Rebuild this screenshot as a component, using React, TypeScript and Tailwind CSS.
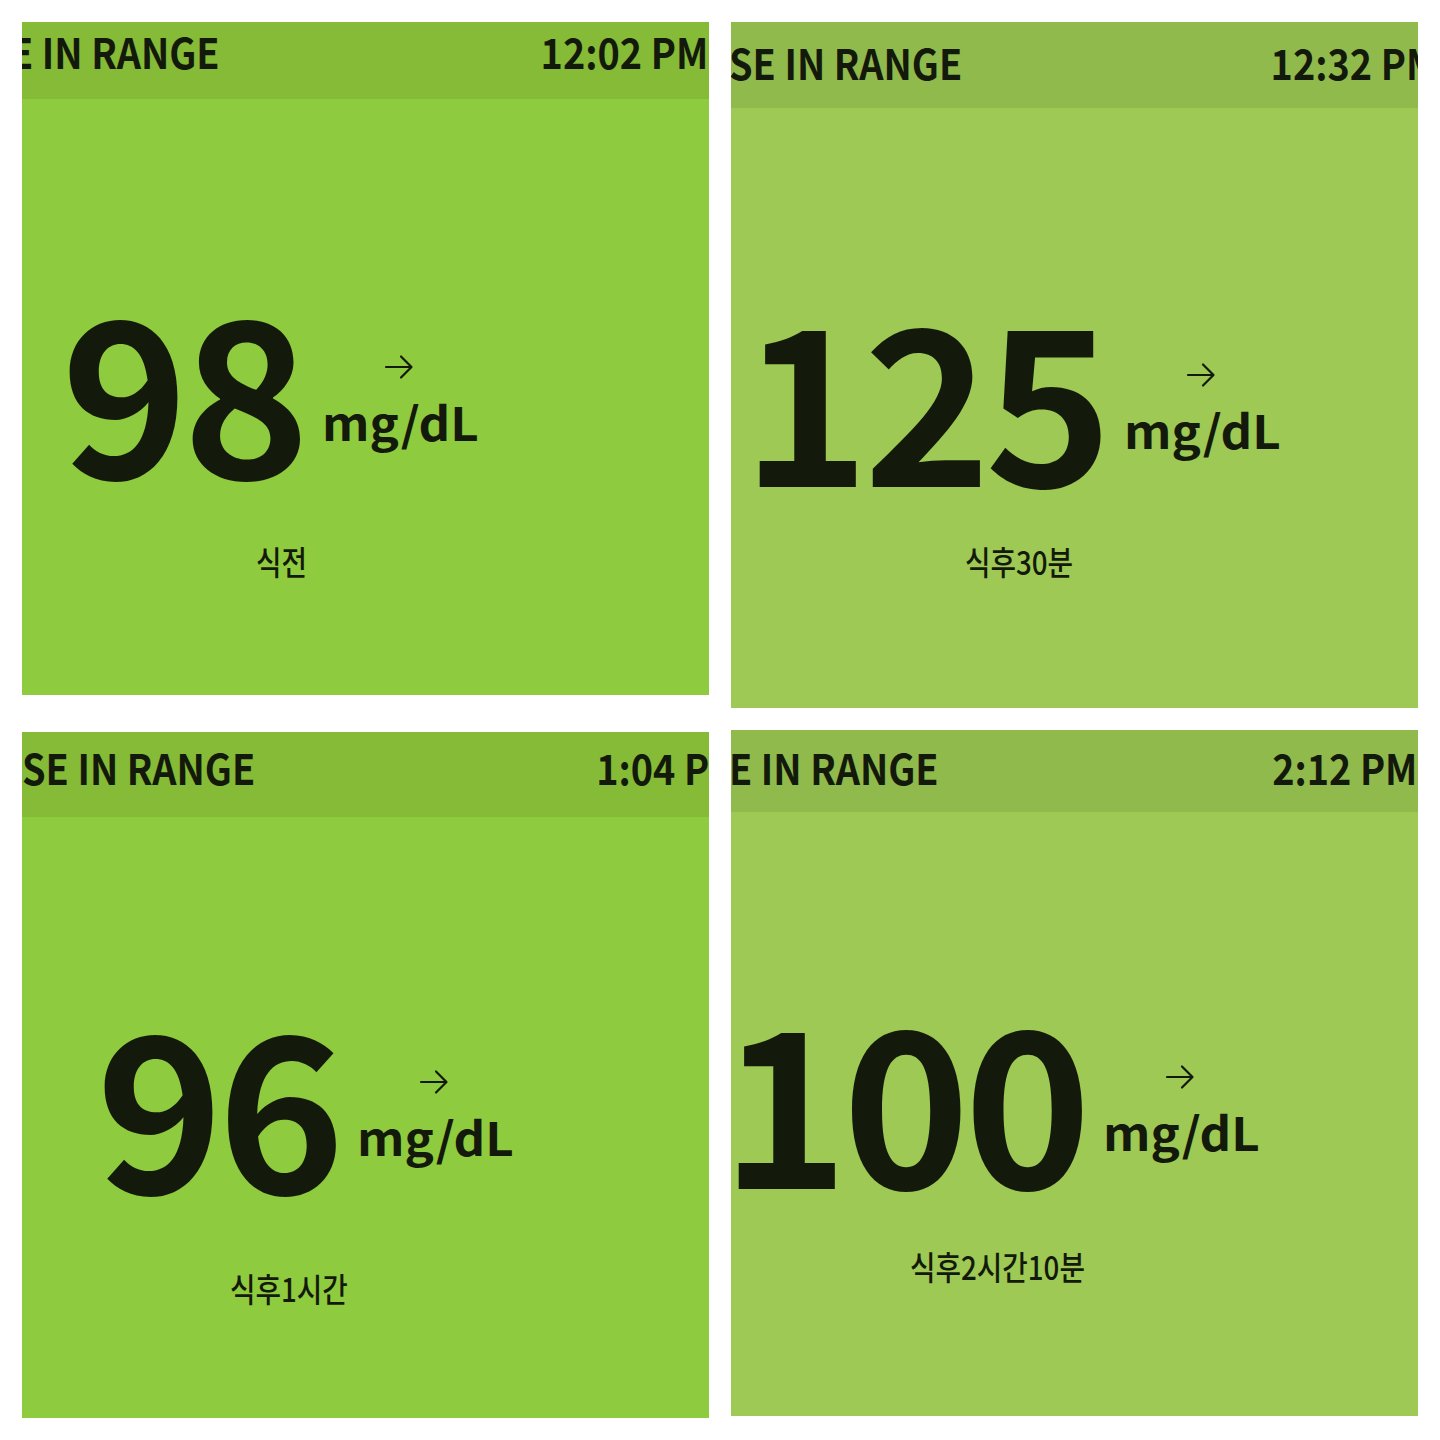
const font = {
  fontFamily: '"Noto Sans CJK KR", "Noto Sans", sans-serif',
};

type Reading = {
  value: string;
  time: string;
  status: string;
  label: string;
  panel: string;
  bar: string;
  title: string;
  clock: string;
  body: string;
  note: string;
};

const readings: Reading[] = [
  {
    value: "98",
    time: "12:02 PM",
    status: "E IN RANGE",
    label: "식전",
    panel: "h-[673px] bg-[#8fcb3e]",
    bar: "h-[77px] pt-[8px] bg-[#85bb37]",
    title: "ml-[-12px]",
    clock: "mr-[1px]",
    body: "ml-[39px] pt-[178px]",
    note: "mt-[52px] ml-[195px]",
  },
  {
    value: "125",
    time: "12:32 PM",
    status: "SE IN RANGE",
    label: "식후30분",
    panel: "h-[686px] bg-[#9dc954]",
    bar: "h-[86px] pt-[19px] bg-[#91ba4d]",
    title: "ml-[-2px]",
    clock: "mr-[-20px]",
    body: "ml-[11px] pt-[177px]",
    note: "mt-[44px] ml-[223px]",
  },
  {
    value: "96",
    time: "1:04 PM",
    status: "SE IN RANGE",
    label: "식후1시간",
    panel: "mt-[2px] h-[686px] bg-[#8fcb3e]",
    bar: "h-[85px] pt-[14px] bg-[#85bb37]",
    title: "ml-0",
    clock: "mr-[-32px]",
    body: "ml-[74px] pt-[175px]",
    note: "mt-[64px] ml-[134px]",
  },
  {
    value: "100",
    time: "2:12 PM",
    status: "E IN RANGE",
    label: "식후2시간10분",
    panel: "h-[686px] bg-[#9dc954]",
    bar: "h-[82px] pt-[16px] bg-[#91ba4d]",
    title: "ml-[-2px]",
    clock: "mr-[1px]",
    body: "ml-[-10px] pt-[175px]",
    note: "mt-[47px] ml-[189px]",
  },
];

function Arrow() {
  return (
    <svg
      width="30"
      height="30"
      viewBox="0 0 30 30"
      fill="none"
      stroke="#141a0b"
      strokeWidth="2.2"
      strokeLinecap="round"
      strokeLinejoin="round"
    >
      <path d="M2 15h25" />
      <path d="M17 4.5 27.5 15 17 25.5" />
    </svg>
  );
}

function Panel({ r }: { r: Reading }) {
  return (
    <div
      className={`flex w-[687px] flex-col overflow-hidden text-[#141a0b] ${r.panel}`}
      style={font}
    >
      <div
        className={`flex shrink-0 items-start justify-between whitespace-nowrap text-[42px] font-bold leading-none ${r.bar}`}
      >
        <span className={`inline-block origin-left scale-x-[0.9] ${r.title}`}>
          {r.status}
        </span>
        <span className={`inline-block origin-right scale-x-[0.9] ${r.clock}`}>
          {r.time}
        </span>
      </div>

      <div className={`flex flex-col items-start ${r.body}`}>
        <div className="flex items-start">
          <span className="text-[216px] font-bold leading-none tracking-[-6px]">
            {r.value}
          </span>
          <div className="ml-[18px] mt-[75px] flex flex-col items-start">
            <div className="ml-[62px]">
              <Arrow />
            </div>
            <span className="mt-[16px] inline-block origin-left scale-x-[1.07] whitespace-nowrap text-[46px] font-bold leading-none">
              mg/dL
            </span>
          </div>
        </div>
        <p
          className={`inline-block origin-left scale-x-[0.84] whitespace-nowrap text-[33px] font-medium leading-none ${r.note}`}
        >
          {r.label}
        </p>
      </div>
    </div>
  );
}

export default function App() {
  return (
    <main className="min-h-[1440px] w-[1440px] bg-white px-[22px] pt-[22px]">
      <div className="grid grid-cols-[687px_687px] items-start gap-x-[22px] gap-y-[22px]">
        {readings.map((r) => (
          <Panel key={r.time} r={r} />
        ))}
      </div>
    </main>
  );
}
